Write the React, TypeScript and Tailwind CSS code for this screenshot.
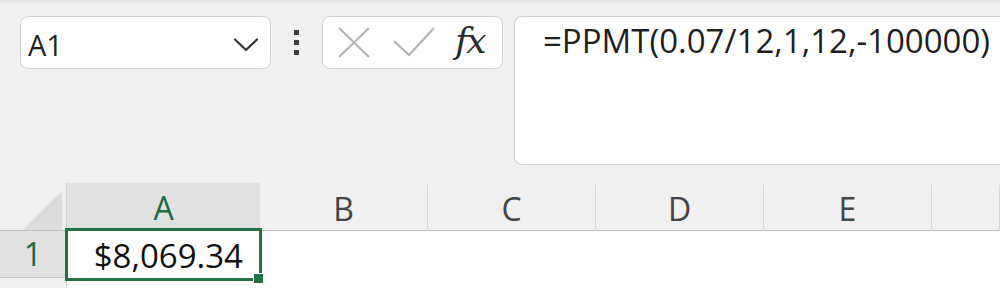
import React from 'react'

const FONT = { fontFamily: '"Open Sans", "Noto Sans", "Liberation Sans", sans-serif' }

const columns = [
  { label: 'A', selected: true },
  { label: 'B' },
  { label: 'C' },
  { label: 'D' },
  { label: 'E' },
  { label: '' },
]

function Chevron() {
  return (
    <svg width="26" height="16" viewBox="0 0 26 16" fill="none">
      <path d="M2 2.5 L13 13 L24 2.5" stroke="#333" strokeWidth="2.2" strokeLinecap="round" strokeLinejoin="round" />
    </svg>
  )
}

export default function App() {
  return (
    <div className="w-[1000px] h-[288px] overflow-hidden bg-[#f0f0f0] text-[#1f1f1f]" style={FONT}>
      <div className="h-[5px] bg-gradient-to-b from-[#e2e2e2] to-[#f0f0f0]" />

      {/* Formula bar */}
      <div className="flex items-start pt-[11px] pl-[20px]">
        <div className="w-[251px] h-[53px] rounded-[8px] border border-[#d2d2d2] bg-white flex items-center justify-between pl-[7px] pr-[11px] pt-1">
          <span className="text-[29px] leading-none">A1</span>
          <Chevron />
        </div>

        <div className="ml-[23px] mt-[14px] flex flex-col gap-[5px]">
          <div className="w-[5px] h-[5px] bg-[#3c3c3c]" />
          <div className="w-[5px] h-[5px] bg-[#3c3c3c]" />
          <div className="w-[5px] h-[5px] bg-[#3c3c3c]" />
        </div>

        <div className="ml-[23px] w-[181px] h-[53px] rounded-[8px] border border-[#d2d2d2] bg-white flex items-center pl-[15px]">
          <svg width="32" height="31" viewBox="0 0 32 31" fill="none">
            <path d="M1 1 L31 30 M31 1 L1 30" stroke="#b3b3b3" strokeWidth="2.2" />
          </svg>
          <svg className="ml-[23px]" width="42" height="31" viewBox="0 0 42 31" fill="none">
            <path d="M1 14 L16 28 L41 1" stroke="#b3b3b3" strokeWidth="2.2" />
          </svg>
          <span
            className="ml-[20px] text-[36px] italic leading-none text-[#2b2b2b] -mt-[4px] tracking-[-2px]"
            style={{ fontFamily: '"DejaVu Serif", "Liberation Serif", serif' }}
          >
            fx
          </span>
        </div>

        <div className="ml-[11px] flex-1 h-[149px] rounded-l-[8px] border border-r-0 border-[#d2d2d2] bg-white pl-[28px] pt-[1px]">
          <span className="text-[33px] leading-[45px] whitespace-nowrap">=PPMT(0.07/12,1,12,-100000)</span>
        </div>
      </div>

      {/* Grid */}
      <div className="relative mt-[18px]">
        <div className="grid grid-cols-[67px_193px_168px_168px_168px_168px_1fr] h-[48px] border-b border-[#bdbdbd]">
          <div className="border-r border-[#d0d0d0] flex items-end justify-end pr-[4px] pb-[3px]">
            <svg width="39" height="39" viewBox="0 0 39 39">
              <polygon points="39,0 39,39 0,39" fill="#dbdbdb" />
            </svg>
          </div>
          {columns.map((c, i) => (
            <div
              key={i}
              className={
                c.selected
                  ? 'bg-[#e1e1e1] flex items-center justify-center text-[32px] text-[#1e6b41]'
                  : 'border-r border-[#d6d6d6] mt-[2px] flex items-center justify-center text-[32px] text-[#444]'
              }
            >
              {c.label}
            </div>
          ))}
        </div>

        <div className="flex">
          <div className="w-[67px] border-r border-[#d0d0d0]">
            <div className="h-[47px] bg-[#e1e1e1] border-b border-[#c6c6c6] flex items-center justify-center text-[32px] text-[#1e6b41]">
              1
            </div>
            <div className="h-[20px]" />
          </div>
          <div className="flex-1 bg-white">
            <div className="w-[193px] h-[49px] flex items-center justify-end pr-[17px] text-[33px] text-[#111]">
              $8,069.34
            </div>
          </div>
        </div>

        {/* Selected cell outline */}
        <div className="absolute left-[65px] top-[45px] w-[197px] h-[53px] border-[3px] border-[#217346]">
          <div className="absolute -right-[4px] -bottom-[5px] w-[10px] h-[10px] bg-[#217346] border-l border-t border-white" />
        </div>
      </div>
    </div>
  )
}
